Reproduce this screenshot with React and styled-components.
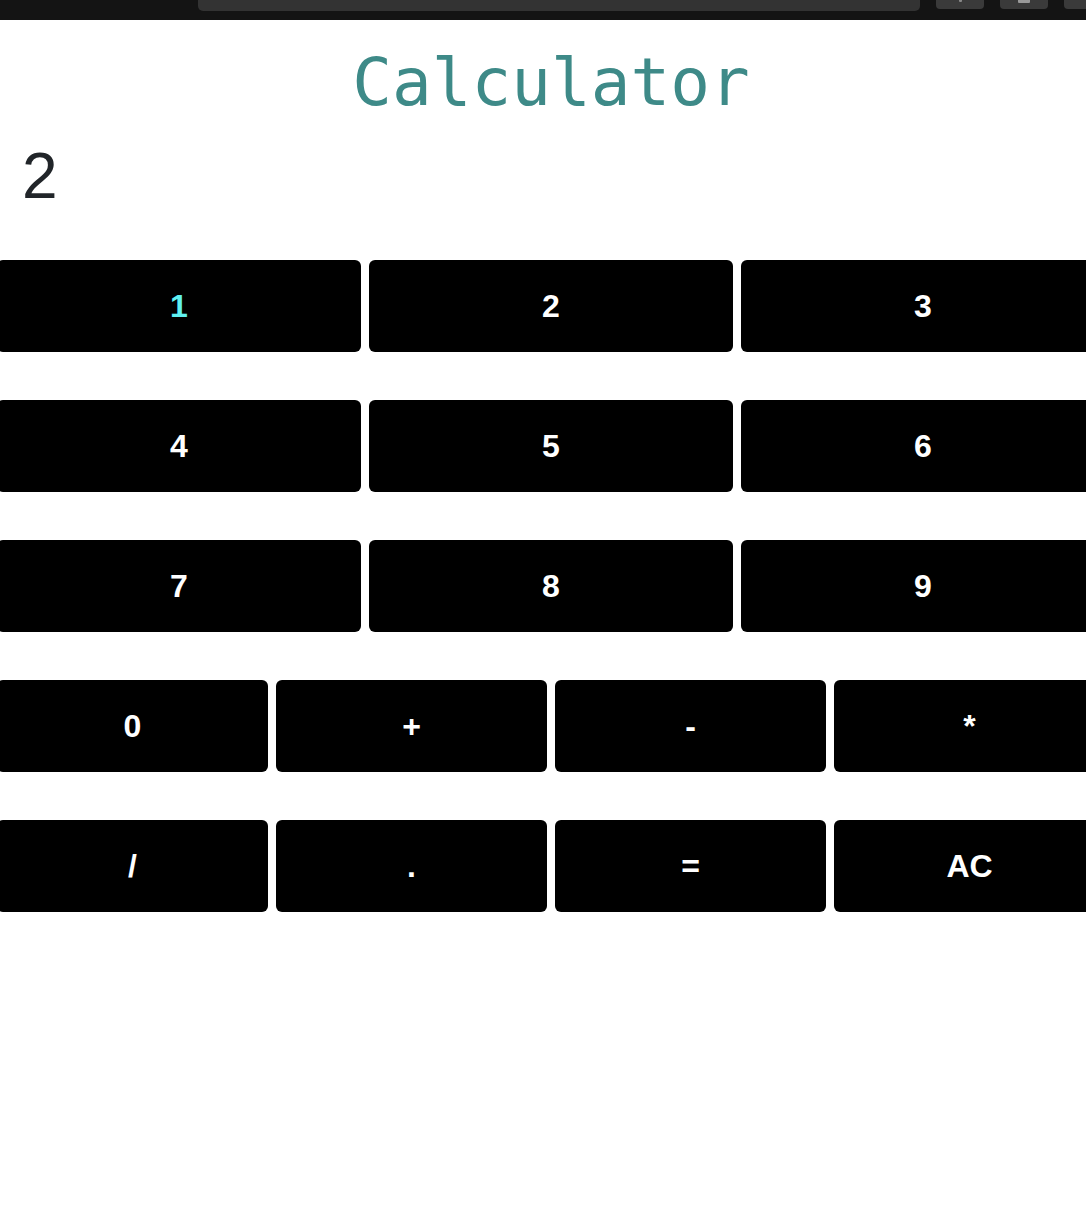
import React from "react";
import styled, { createGlobalStyle } from "styled-components";

const Global = createGlobalStyle`
  html, body { margin: 0; padding: 0; background: #fff; overflow: hidden; }
  body { font-family: "Liberation Sans", Arial, sans-serif; }
`;

const Chrome = styled.div`
  height: 20px;
  background: #141414;
  display: flex;
  align-items: flex-start;
  padding-left: 198px;
  gap: 16px;
  overflow: hidden;
`;

const UrlBar = styled.div`
  flex: 0 0 722px;
  height: 11px;
  background: #333;
  border-radius: 0 0 5px 5px;
`;

const ChromeBtn = styled.div`
  flex: 0 0 48px;
  height: 9px;
  background: #3a3a3a;
  border-radius: 0 0 4px 4px;
  display: flex;
  justify-content: center;
`;

const BtnGlyph = styled.div`
  width: ${(p) => p.$w}px;
  height: ${(p) => p.$h}px;
  background: ${(p) => p.$c};
  border-radius: 0 0 1px 1px;
`;

const Page = styled.div`
  width: 1108px;
  margin-left: -3px;
`;

const Title = styled.h1`
  margin: 0;
  padding-top: 24px;
  text-align: center;
  font-family: "DejaVu Sans Mono", monospace;
  font-weight: normal;
  font-size: 66px;
  line-height: 77px;
  color: #3e8a88;
`;

const Display = styled.div`
  padding-left: 25px;
  margin-top: 18px;
  height: 121px;
  font-family: "Liberation Sans", Arial, sans-serif;
  font-size: 64px;
  line-height: 74px;
  color: #212529;
`;

const Row = styled.div`
  display: grid;
  grid-template-columns: repeat(${(p) => p.$cols}, 1fr);
  gap: 8px;
  margin-bottom: 48px;
`;

const Key = styled.button`
  height: 92px;
  border: none;
  border-radius: 6px;
  background: #000;
  color: ${(p) => (p.$active ? "#5ff0f0" : "#fff")};
  font-family: "Liberation Sans", Arial, sans-serif;
  font-weight: bold;
  font-size: 32px;
  padding: 0;
  cursor: pointer;
  display: flex;
  align-items: center;
  justify-content: center;
`;

const rows = [
  ["1", "2", "3"],
  ["4", "5", "6"],
  ["7", "8", "9"],
  ["0", "+", "-", "*"],
  ["/", ".", "=", "AC"],
];

export default function App() {
  return (
    <>
      <Global />
      <Chrome>
        <UrlBar />
        <ChromeBtn>
          <BtnGlyph $w={3} $h={2} $c="#888" />
        </ChromeBtn>
        <ChromeBtn>
          <BtnGlyph $w={12} $h={3} $c="#999" />
        </ChromeBtn>
        <ChromeBtn />
      </Chrome>
      <Page>
        <Title>Calculator</Title>
        <Display>2</Display>
        {rows.map((r, i) => (
          <Row key={i} $cols={r.length}>
            {r.map((k) => (
              <Key key={k} $active={k === "1"}>
                {k}
              </Key>
            ))}
          </Row>
        ))}
      </Page>
    </>
  );
}
